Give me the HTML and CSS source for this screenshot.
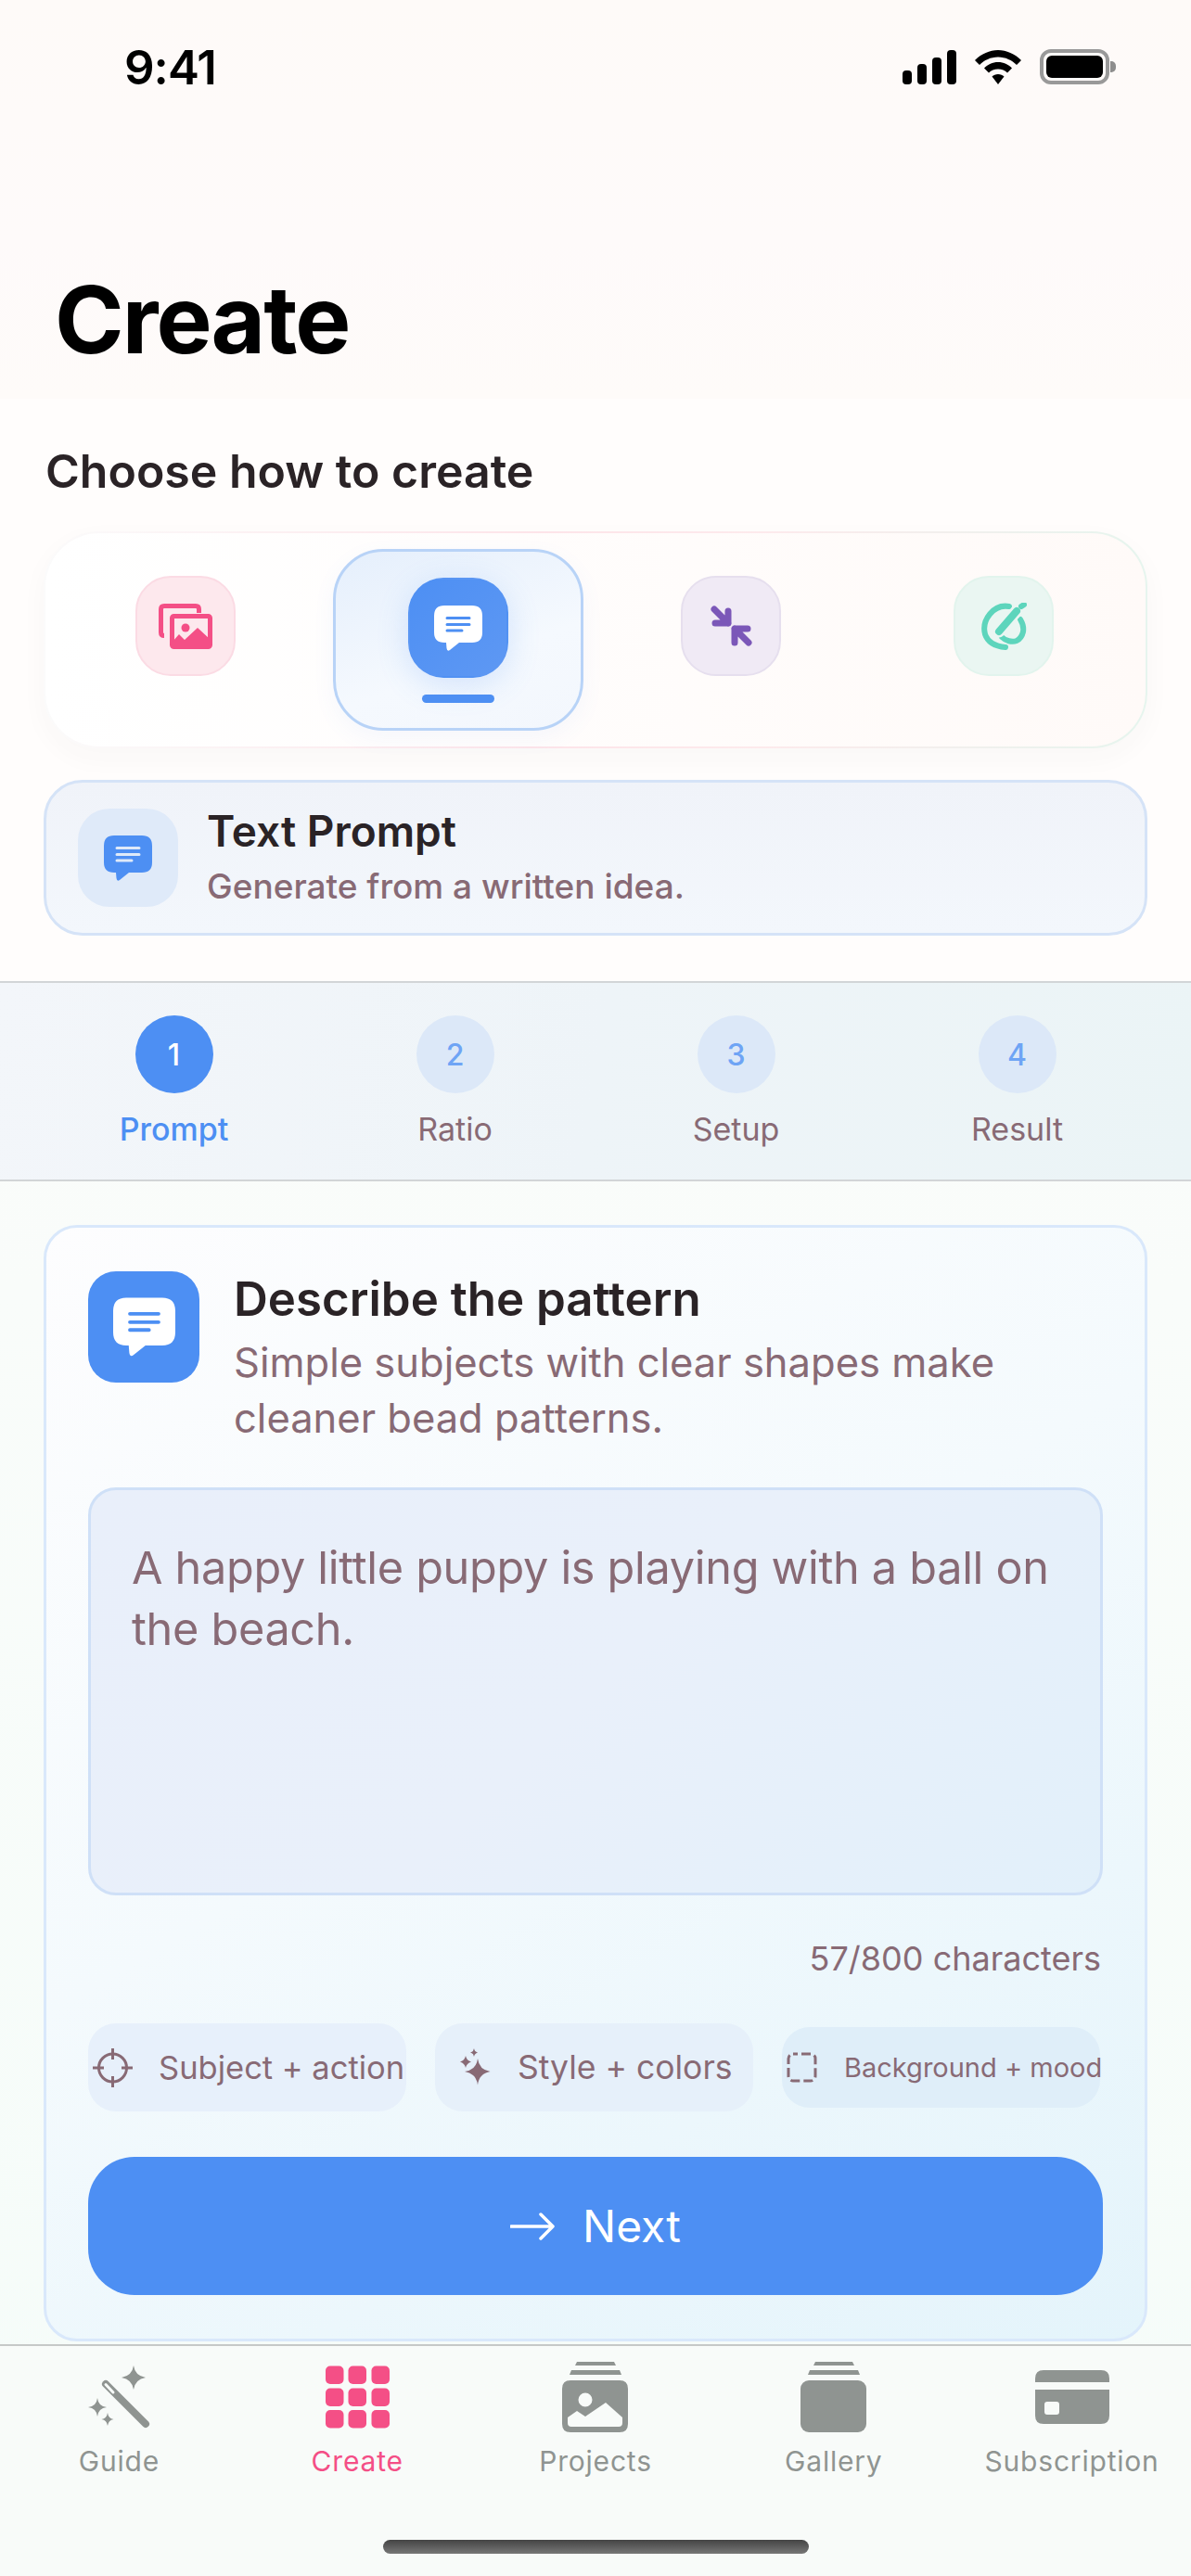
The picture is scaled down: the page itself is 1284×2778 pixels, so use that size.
FILE: index.html
```html
<!DOCTYPE html>
<html lang="en">
<head>
  <meta charset="UTF-8" />
  <meta name="viewport" content="width=device-width, initial-scale=1" />
  <title>Create</title>
  <link rel="stylesheet" href="styles.css">
</head>
<body>
  <svg class="defs" width="0" height="0" aria-hidden="true">
    <symbol id="chat" viewBox="0 0 52 49">
      <path fill="currentColor" d="M11 0H41Q52 0 52 11V29Q52 40 41 40H27L17 48Q14 50 13.500 46L13 40H11Q0 40 0 29V11Q0 0 11 0Z"/>
      <path class="chat-lines" d="M14 13.500H38M14 20.500H38M14 27H30"/>
    </symbol>
  </svg>

  <div class="phone">
    <header class="top">
      <div class="status-bar">
        <span class="clock">9:41</span>
        <div class="status-icons">
          <svg class="signal" width="58" height="37" viewBox="0 0 58 37">
            <rect x="0" y="22" width="10" height="15" rx="4"/>
            <rect x="16" y="15" width="10" height="22" rx="4"/>
            <rect x="32" y="8" width="10" height="29" rx="4"/>
            <rect x="48" y="0" width="10" height="37" rx="4"/>
          </svg>
          <svg class="wifi" width="50" height="37" viewBox="0 0 50 37">
            <path d="M25 0C34 0 43 4 50 11L45 16C40 11 33 7.500 25 7.500S10 11 5 16L0 11C7 4 16 0 25 0Z"/>
            <path d="M25 13C31 13 36 15.500 40 19.500L35 24.500C32.500 22 29 20.500 25 20.500S17.500 22 15 24.500L10 19.500C14 15.500 19 13 25 13Z"/>
            <path d="M25 26C27.500 26 30 27 31.500 28.500L25 37L18.500 28.500C20 27 22.500 26 25 26Z"/>
          </svg>
          <div class="battery"><div class="battery-fill"></div></div>
        </div>
      </div>
      <h1 class="page-title">Create</h1>
    </header>

    <section class="choose">
      <h2 class="choose-title">Choose how to create</h2>
      <div class="modes">
        <div class="mode">
          <div class="tile tile-pink">
            <svg width="58" height="49" viewBox="0 0 58 49">
              <path class="pink-line" d="M6 34.500Q2.500 34.500 2.500 31V6Q2.500 2.500 6 2.500H40Q43.500 2.500 43.500 6V10"/>
              <rect class="pink-front" x="14.500" y="13.500" width="41" height="33" rx="2"/>
              <circle class="pink-fill" cx="29" cy="26" r="4.500"/>
              <path class="pink-fill" d="M15 41L22 33L28 39L42 26L55 38V47H15Z"/>
            </svg>
          </div>
        </div>
        <div class="mode mode-active">
          <div class="tile tile-blue">
            <svg class="chat-white" width="52" height="49"><use href="#chat"/></svg>
          </div>
          <div class="mode-bar"></div>
        </div>
        <div class="mode">
          <div class="tile tile-purple">
            <svg width="45" height="44" viewBox="0 0 45 44">
              <path class="purple-line" d="M4 4L19 19M19 6V19H5"/>
              <path class="purple-line" d="M26 40V25H40M26 25L41 40"/>
            </svg>
          </div>
        </div>
        <div class="mode">
          <div class="tile tile-green">
            <svg width="49" height="51" viewBox="0 0 49 51">
              <path class="green-line" d="M30 4C13 1 0 19 4 34C7 43 15 47 26 48"/>
              <path class="green-line" d="M42 18C48 28 45 37 38 41C33 43 26 41 22 37"/>
              <path class="green-gap" d="M19 31L38 9"/>
              <path class="green-pen" d="M19 31L38 9"/>
              <path class="green-tip" d="M43 4L46 2"/>
            </svg>
          </div>
        </div>
      </div>

      <div class="mode-info">
        <div class="info-tile">
          <svg class="chat-blue" width="52" height="49"><use href="#chat"/></svg>
        </div>
        <div class="info-text">
          <div class="info-name">Text Prompt</div>
          <div class="info-sub">Generate from a written idea.</div>
        </div>
      </div>
    </section>

    <nav class="steps">
      <div class="step step-on"><div class="step-dot">1</div><div class="step-label">Prompt</div></div>
      <div class="step"><div class="step-dot">2</div><div class="step-label">Ratio</div></div>
      <div class="step"><div class="step-dot">3</div><div class="step-label">Setup</div></div>
      <div class="step"><div class="step-dot">4</div><div class="step-label">Result</div></div>
    </nav>

    <main class="content">
      <div class="card">
        <div class="card-head">
          <div class="card-tile">
            <svg class="chat-big" width="67" height="64"><use href="#chat"/></svg>
          </div>
          <div class="card-head-text">
            <div class="card-title">Describe the pattern</div>
            <div class="card-sub">Simple subjects with clear shapes make cleaner bead patterns.</div>
          </div>
        </div>

        <div class="prompt-box">A happy little puppy is playing with a ball on the beach.</div>
        <div class="counter">57/800 characters</div>

        <div class="chips">
          <div class="chip chip-subject">
            <svg width="43" height="42" viewBox="0 0 43 42">
              <circle class="chip-line" cx="21.500" cy="21" r="15"/>
              <path class="chip-line" d="M21.500 0V12M21.500 30V42M0 21H12M31 21H43"/>
            </svg>
            <span>Subject + action</span>
          </div>
          <div class="chip chip-style">
            <svg width="33" height="42" viewBox="0 0 33 42">
              <path class="chip-fill" d="M19 11Q20.500 23 32.500 25Q20.500 27 19 39.500Q17.500 27 5 25Q17.500 23 19 11Z"/>
              <path class="chip-fill" d="M6 8Q7 13 12 14.500Q7 16 6 21Q5 16 0 14.500Q5 13 6 8Z"/>
              <path class="chip-fill" d="M15 0Q15.500 3.500 19 4.500Q15.500 5.500 15 9Q14.500 5.500 11 4.500Q14.500 3.500 15 0Z"/>
            </svg>
            <span>Style + colors</span>
          </div>
          <div class="chip chip-mood">
            <svg width="33" height="33" viewBox="0 0 33 33">
              <rect class="chip-dash" x="2" y="2" width="29" height="29" rx="5"/>
            </svg>
            <span>Background + mood</span>
          </div>
        </div>

        <button class="next-btn">
          <svg width="48" height="30" viewBox="0 0 48 30">
            <path d="M1 15H46M33 2L46 15L33 28"/>
          </svg>
          <span>Next</span>
        </button>
      </div>
    </main>

    <footer class="tabs">
      <div class="tab">
        <svg width="67" height="68" viewBox="0 0 67 68">
          <path d="M49 0Q50.500 11 62 13Q50.500 15 49 26Q47.500 15 36 13Q47.500 11 49 0Z"/>
          <path d="M10 35Q11 44 20 45Q11 46 10 55Q9 46 0 45Q9 44 10 35Z"/>
          <path d="M21 51Q21.800 57 27.500 58Q21.800 59 21 65Q20.200 59 14.500 58Q20.200 57 21 51Z"/>
          <path class="wand" d="M19 20L62 63"/>
          <path class="wand-hole" d="M19 20.500L27 29"/>
        </svg>
        <div class="tab-label">Guide</div>
      </div>
      <div class="tab tab-on">
        <svg width="69" height="67" viewBox="0 0 69 67">
          <rect x="0" y="0" width="19.500" height="19.500" rx="5"/><rect x="24.500" y="0" width="19.500" height="19.500" rx="5"/><rect x="49.500" y="0" width="19.500" height="19.500" rx="5"/>
          <rect x="0" y="24" width="19.500" height="19.500" rx="5"/><rect x="24.500" y="24" width="19.500" height="19.500" rx="5"/><rect x="49.500" y="24" width="19.500" height="19.500" rx="5"/>
          <rect x="0" y="47.500" width="19.500" height="19.500" rx="5"/><rect x="24.500" y="47.500" width="19.500" height="19.500" rx="5"/><rect x="49.500" y="47.500" width="19.500" height="19.500" rx="5"/>
        </svg>
        <div class="tab-label">Create</div>
      </div>
      <div class="tab">
        <svg width="71" height="76" viewBox="0 0 71 76">
          <path d="M16 0H56L58 4H14Z"/>
          <path d="M10 9H62L64 14H8Z"/>
          <path fill-rule="evenodd" d="M9 20H62Q71 20 71 29V67Q71 76 62 76H9Q0 76 0 67V29Q0 20 9 20ZM25 33.500A7.500 7.500 0 1 0 25 48.500A7.500 7.500 0 1 0 25 33.500ZM6 66V60L16 53L25 59L47 44L65 60V66Q65 70 61 70H10Q6 70 6 66Z"/>
        </svg>
        <div class="tab-label">Projects</div>
      </div>
      <div class="tab">
        <svg width="71" height="76" viewBox="0 0 71 76">
          <path d="M16 0H56L58 4H14Z"/>
          <path d="M10 9H62L64 14H8Z"/>
          <rect x="0" y="20" width="71" height="56" rx="9"/>
        </svg>
        <div class="tab-label">Gallery</div>
      </div>
      <div class="tab">
        <svg width="80" height="58" viewBox="0 0 80 58">
          <path fill-rule="evenodd" d="M9 0H71Q80 0 80 9V49Q80 58 71 58H9Q0 58 0 49V9Q0 0 9 0ZM0 13V21H80V13ZM13 34Q10 34 10 37V45Q10 48 13 48H23Q26 48 26 45V37Q26 34 23 34Z"/>
        </svg>
        <div class="tab-label">Subscription</div>
      </div>
    </footer>
    <div class="home-area"><div class="home-bar"></div></div>
  </div>
</body>
</html>
```

FILE: styles.css
```css
html, body {
  margin: 0;
  padding: 0;
  font-family: 'Inter', 'Noto Sans', sans-serif;
  color: #2a2326;
}

.defs {
  display: block;
  height: 0;
}

.phone {
  width: 1284px;
  height: 2778px;
  overflow: hidden;
  display: flex;
  flex-direction: column;
  background: linear-gradient(180deg, #fffdfc 0%, #f9fcfa 50%, #f5fcf9 100%);
}

/* header */
.top {
  height: 430px;
  box-sizing: border-box;
  padding-top: 46px;
  background: linear-gradient(180deg, #fefaf8 0%, #fefafa 60%, #fefbf9 100%);
}

.status-bar {
  display: flex;
  justify-content: space-between;
  align-items: center;
  padding: 0 88px 0 134px;
  height: 52px;
}

.clock {
  font-size: 51px;
  font-weight: 600;
  color: #000;
  letter-spacing: -1px;
}

.status-icons {
  display: flex;
  align-items: center;
  gap: 20px;
}

.status-icons svg {
  fill: #000;
  display: block;
}

.battery {
  width: 75px;
  height: 38px;
  box-sizing: border-box;
  border: 4px solid #999;
  border-radius: 12px;
  padding: 3px;
  position: relative;
}

.battery::after {
  content: "";
  position: absolute;
  right: -11px;
  top: 9px;
  width: 6px;
  height: 12px;
  background: #8d8d8d;
  border-radius: 0 5px 5px 0;
}

.battery-fill {
  height: 100%;
  background: #000;
  border-radius: 6px;
}

.page-title {
  margin: 191px 0 0 59px;
  font-size: 101px;
  line-height: 110px;
  font-weight: 700;
  color: #000;
  letter-spacing: -2px;
}

/* create mode picker */
.choose {
  height: 628px;
  box-sizing: border-box;
  padding: 48px 47px 0;
  background: #fffdfc;
}

.choose-title {
  margin: 0 0 0 2px;
  font-size: 50px;
  line-height: 60px;
  font-weight: 600;
}

.modes {
  margin-top: 35px;
  height: 234px;
  box-sizing: border-box;
  display: flex;
  gap: 24px;
  padding: 17px 16px;
  border: 2px solid transparent;
  border-radius: 60px;
  background:
    linear-gradient(90deg, #ffffff 0%, #fffaf8 100%) padding-box,
    linear-gradient(90deg, #fbfbfb 0%, #fde4e9 45%, #fdeaec 65%, #e6f5ee 100%) border-box;
  box-shadow: 0 10px 30px rgba(60, 60, 60, 0.03);
}

.mode {
  width: 270px;
  flex-shrink: 0;
  box-sizing: border-box;
  padding-top: 29px;
  display: flex;
  flex-direction: column;
  align-items: center;
}

.mode-active {
  padding-top: 28px;
  border: 3px solid #b8d3f7;
  border-radius: 54px;
  background: linear-gradient(160deg, #e5effc 0%, #f5f9fe 60%, #f3f7fd 100%);
  box-shadow: 0 8px 24px rgba(77, 143, 243, 0.06);
}

.tile {
  width: 108px;
  height: 108px;
  box-sizing: border-box;
  border-radius: 38px;
  border: 2px solid transparent;
  display: flex;
  align-items: center;
  justify-content: center;
}

.tile-pink {
  background: #fde8ed;
  border-color: #fbdbe4;
}

.tile-blue {
  background: linear-gradient(135deg, #4d8ff3, #5e98f3);
  box-shadow: 0 8px 34px rgba(77, 143, 243, 0.2);
}

.tile-purple {
  background: #f0eaf5;
  border-color: #e6dfee;
}

.tile-green {
  background: #eaf6f2;
  border-color: #e2f4ed;
}

.mode-bar {
  width: 78px;
  height: 9px;
  margin-top: 18px;
  border-radius: 5px;
  background: #4d8ff3;
}

.pink-line {
  fill: none;
  stroke: #f44f86;
  stroke-width: 5;
}

.pink-front {
  fill: #fde8ed;
  stroke: #f44f86;
  stroke-width: 5;
}

.pink-fill {
  fill: #f44f86;
}

.purple-line {
  fill: none;
  stroke: #7b57b8;
  stroke-width: 7;
  stroke-linecap: round;
  stroke-linejoin: round;
}

.green-line,
.green-pen,
.green-tip,
.green-gap {
  fill: none;
  stroke: #5dd5bc;
  stroke-linecap: round;
}

.green-line {
  stroke-width: 6;
}

.green-gap {
  stroke: #eaf6f2;
  stroke-width: 13;
}

.green-pen {
  stroke-width: 8;
}

.green-tip {
  stroke-width: 6;
}

.chat-lines {
  fill: none;
  stroke: var(--chat-line);
  stroke-width: 3;
  stroke-linecap: round;
}

.chat-white {
  color: #fff;
  --chat-line: #4d8ff3;
}

.chat-blue {
  color: #4d8ff3;
  --chat-line: #dfeaf9;
}

.chat-big {
  color: #fff;
  --chat-line: #4d8ff3;
}

.mode-info {
  margin-top: 34px;
  height: 168px;
  box-sizing: border-box;
  display: flex;
  align-items: center;
  gap: 31px;
  padding: 0 34px;
  border: 3px solid #d5e3f7;
  border-radius: 42px;
  background: linear-gradient(180deg, #f0f3f9 0%, #f3f7fc 100%);
}

.info-tile {
  width: 108px;
  height: 106px;
  border-radius: 34px;
  background: #dfeaf9;
  display: flex;
  align-items: center;
  justify-content: center;
}

.info-name {
  font-size: 46px;
  line-height: 52px;
  font-weight: 600;
  margin-top: -2px;
}

.info-sub {
  margin-top: 12px;
  font-size: 37px;
  line-height: 44px;
  font-weight: 500;
  color: #886a75;
}

/* step indicator */
.steps {
  height: 216px;
  box-sizing: border-box;
  padding: 35px 0 0 36px;
  display: flex;
  border-top: 2px solid #d2d5d7;
  border-bottom: 2px solid #d2d5d7;
  background: linear-gradient(100deg, #f3f6fa 0%, #eef4f8 50%, #ebf4f6 100%);
}

.step {
  width: 303px;
  flex-shrink: 0;
  display: flex;
  flex-direction: column;
  align-items: center;
}

.step-dot {
  width: 84px;
  height: 84px;
  border-radius: 50%;
  background: #dce8f8;
  color: #6ea4f5;
  font-size: 32px;
  font-weight: 500;
  display: flex;
  align-items: center;
  justify-content: center;
}

.step-label {
  margin-top: 18px;
  font-size: 34px;
  line-height: 42px;
  color: #886a75;
}

.step-on .step-dot {
  background: #4d8ff3;
  color: #fff;
}

.step-on .step-label {
  color: #4d8ff3;
  font-weight: 500;
}

/* main card */
.content {
  padding: 47px 47px 0;
}

.card {
  height: 1204px;
  box-sizing: border-box;
  padding: 47px 45px 0;
  border: 3px solid #d9e8fb;
  border-radius: 36px;
  background: linear-gradient(150deg, #fdfdfe 0%, #f4fafd 45%, #e4f4fb 100%);
}

.card-head {
  display: flex;
  gap: 37px;
}

.card-tile {
  width: 120px;
  height: 120px;
  flex-shrink: 0;
  border-radius: 30px;
  background: #4d8ff3;
  display: flex;
  align-items: center;
  justify-content: center;
}

.card-title {
  font-size: 51px;
  line-height: 60px;
  font-weight: 600;
}

.card-sub {
  margin-top: 8px;
  font-size: 43.500px;
  line-height: 60px;
  color: #886a75;
}

.prompt-box {
  margin-top: 45px;
  height: 440px;
  box-sizing: border-box;
  padding: 51px 44px 0;
  border: 3px solid #cfe0f7;
  border-radius: 30px;
  background: linear-gradient(135deg, #e9effa 0%, #e9f0fa 50%, #e2f0fa 100%);
  font-size: 48.600px;
  letter-spacing: -0.3px;
  line-height: 66px;
  color: #886a75;
}

.counter {
  margin-top: 46px;
  padding-right: 2px;
  text-align: right;
  font-size: 36px;
  line-height: 44px;
  color: #886a75;
}

.chips {
  margin-top: 48px;
  display: flex;
  gap: 31px;
  align-items: center;
}

.chip {
  width: 343px;
  flex-shrink: 0;
  height: 95px;
  box-sizing: border-box;
  display: flex;
  align-items: center;
  border-radius: 30px;
  background: #e7f0fb;
  color: #886a75;
  font-size: 34.500px;
  white-space: nowrap;
}

.chip svg {
  flex-shrink: 0;
}

.chip-subject {
  padding-left: 5px;
  gap: 28px;
}

.chip-style {
  padding-left: 27px;
  gap: 29px;
  background: #e6f0fa;
  font-size: 35.500px;
}

.chip-mood {
  height: 87px;
  padding-left: 5px;
  gap: 29px;
  background: #dfeef9;
  font-size: 29px;
}

.chip-line {
  fill: none;
  stroke: #886a75;
  stroke-width: 3;
}

.chip-fill {
  fill: #886a75;
}

.chip-dash {
  fill: none;
  stroke: #886a75;
  stroke-width: 3;
  stroke-dasharray: 10 4;
  stroke-dashoffset: 5;
}

.next-btn {
  margin-top: 49px;
  width: 100%;
  height: 149px;
  border: none;
  border-radius: 50px;
  background: #4d8ff3;
  color: #fff;
  font-family: inherit;
  font-size: 48px;
  display: flex;
  align-items: center;
  justify-content: center;
  gap: 30px;
}

.next-btn svg {
  fill: none;
  stroke: #fff;
  stroke-width: 3.5;
  stroke-linecap: round;
  stroke-linejoin: round;
}

/* bottom tabs */
.tabs {
  margin-top: 3px;
  flex: 1;
  display: flex;
  border-top: 2px solid #c6c9c8;
  background: #f8fbf9;
  padding-top: 17px;
  color: #8f9491;
  height: 130px;
}

.tab {
  width: 20%;
  display: flex;
  flex-direction: column;
  align-items: center;
}

.tab svg {
  fill: #8f9491;
  height: 76px;
  display: block;
}

.tab-label {
  margin-top: 12px;
  font-size: 30px;
  line-height: 38px;
  letter-spacing: 0.8px;
}

.tab-on svg {
  fill: #f44f86;
}

.tab-on .tab-label {
  color: #f44f86;
}

.wand {
  fill: none;
  stroke: #8f9491;
  stroke-width: 8;
  stroke-linecap: round;
}

.wand-hole {
  fill: none;
  stroke: #f8fbf9;
  stroke-width: 3;
  stroke-linecap: round;
}

.home-area {
  height: 79px;
  flex-shrink: 0;
  background: #f8fbf9;
  box-sizing: border-box;
  padding-top: 40px;
  display: flex;
  justify-content: center;
  margin-top: -40px;
}

.home-bar {
  width: 459px;
  height: 15px;
  border-radius: 8px;
  background: linear-gradient(180deg, #444 0%, #777 100%);
}
```
